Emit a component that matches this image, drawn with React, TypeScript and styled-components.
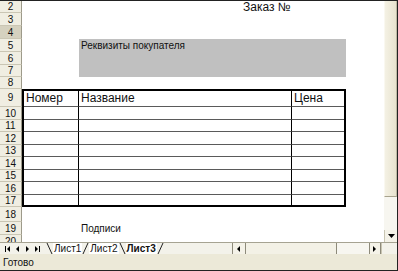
import React from "react";
import styled, { createGlobalStyle } from "styled-components";

const GlobalStyle = createGlobalStyle`
  html, body {
    margin: 0;
    padding: 0;
    background: #ffffff;
  }
  body {
    font-family: "Liberation Sans", Arial, sans-serif;
  }
`;

const Window = styled.div`
  width: 398px;
  height: 271px;
  box-sizing: border-box;
  border-top: 1px solid #222;
  border-right: 1px solid #222;
  border-bottom: 1px solid #222;
  display: flex;
  flex-direction: column;
  overflow: hidden;
  background: #fff;
`;

const SheetArea = styled.div`
  display: flex;
  height: 241px;
  overflow: hidden;
`;

const Grid = styled.div`
  flex: 1;
  display: grid;
  grid-template-columns: 22px 57px 213px 54px 1fr;
  grid-template-rows: 12px 13px 13px 13px 13px 12px 12px 18px 13px 12px 13px 12px 13px 12px 13px 12px 15px 13px 13px;
  align-content: start;
  overflow: hidden;
`;

const RowHead = styled.div<{ $active?: boolean; $row: number }>`
  grid-column: 1;
  grid-row: ${(p) => p.$row};
  box-sizing: border-box;
  border-bottom: 1px solid #cac6b4;
  border-right: 1px solid #9d9a8a;
  background: ${(p) => (p.$active ? "#d5d1bf" : "#f0eee2")};
  color: #111;
  font-size: 10px;
  display: flex;
  align-items: center;
  justify-content: center;
`;

const Title = styled.div`
  grid-column: 3 / 5;
  grid-row: 1;
  padding-left: 164px;
  font-size: 12px;
  color: #111;
  line-height: 12px;
`;

const GrayBox = styled.div`
  grid-column: 3 / 5;
  grid-row: 4 / 7;
  background: #c0c0c0;
  font-size: 10px;
  color: #111;
  padding: 1px 0 0 2px;
`;

const Table = styled.div`
  grid-column: 2 / 5;
  grid-row: 8 / 17;
  box-sizing: border-box;
  border: 2px solid #000;
  display: grid;
  grid-template-columns: 55px 213px 1fr;
  grid-template-rows: 16px 13px 12px 13px 12px 13px 12px 13px 1fr;
`;

const Cell = styled.div<{ $last?: boolean; $lastRow?: boolean }>`
  box-sizing: border-box;
  border-right: ${(p) => (p.$last ? "none" : "1px solid #000")};
  border-bottom: ${(p) => (p.$lastRow ? "none" : "1px solid #5a5a5a")};
  font-size: 12px;
  color: #111;
  padding-left: 2px;
  line-height: 15px;
  white-space: nowrap;
`;

const Note = styled.div`
  grid-column: 3;
  grid-row: 18;
  font-size: 10px;
  color: #111;
  padding-left: 2px;
  display: flex;
  align-items: center;
`;

const VScroll = styled.div`
  width: 13px;
  display: flex;
  flex-direction: column;
  background: #f7f6f0;
`;

const VThumb = styled.div`
  height: 196px;
  box-sizing: border-box;
  background: linear-gradient(to right, #f4f1e4, #e8e3cf);
  border-left: 1px solid #faf8f0;
  border-right: 1px solid #bdb8a2;
  border-bottom: 1px solid #a8a38e;
`;

const VTrack = styled.div`
  flex: 1;
`;

const ArrowButton = styled.div`
  height: 12px;
  box-sizing: border-box;
  border-left: 1px solid #c9c5b2;
  display: flex;
  align-items: center;
  justify-content: center;
  background: #f4f2e8;
`;

const TabBar = styled.div`
  height: 12px;
  display: flex;
  align-items: stretch;
  background: #f3f2ea;
  border-top: 1px solid #a6a392;
  box-sizing: border-box;
`;

const NavButtons = styled.div`
  width: 46px;
  display: flex;
  align-items: center;
  justify-content: space-around;
  padding: 0 2px;
  box-sizing: border-box;
`;

const Tabs = styled.div`
  display: flex;
  align-items: stretch;
  width: 186px;
`;

const TabLabel = styled.span<{ $active?: boolean }>`
  font-size: 10px;
  line-height: 11px;
  font-weight: ${(p) => (p.$active ? 700 : 400)};
  color: #111;
  background: #fff;
  padding: 0 1px;
`;

const HScroll = styled.div`
  flex: 1;
  display: flex;
  background: #f7f6f0;
`;

const HButton = styled.div<{ $w: number }>`
  width: ${(p) => p.$w}px;
  box-sizing: border-box;
  border-left: 1px solid #8d8a7a;
  border-right: 1px solid #8d8a7a;
  display: flex;
  align-items: center;
  justify-content: center;
  background: #f4f2e8;
`;

const HThumb = styled.div`
  width: 91px;
  box-sizing: border-box;
  background: #f3f1e6;
  border-right: 1px solid #8d8a7a;
`;

const HTrack = styled.div`
  flex: 1;
`;

const Corner = styled.div`
  width: 15px;
  background: #f3f2ea;
  border-left: 1px solid #c9c5b2;
`;

const StatusBar = styled.div`
  flex: 1;
  display: flex;
  align-items: center;
  background: #ece9d8;
  font-size: 10px;
  color: #111;
  padding-left: 3px;
`;

const Tri = ({ dir, bar }: { dir: "l" | "r" | "d"; bar?: boolean }) => {
  if (dir === "d") {
    return (
      <svg width="7" height="4" viewBox="0 0 7 4">
        <path d="M0 0h7L3.5 4z" fill="#000" />
      </svg>
    );
  }
  return (
    <svg width={bar ? 6 : 4} height="6" viewBox={bar ? "0 0 6 6" : "0 0 4 6"}>
      {dir === "l" ? (
        <>
          {bar && <rect x="0" y="0" width="1" height="6" fill="#000" />}
          <path d={bar ? "M5 0v6L2 3z" : "M3 0v6L0 3z"} fill="#000" />
        </>
      ) : (
        <>
          <path d="M0 0v6l3-3z" fill="#000" />
          {bar && <rect x="4" y="0" width="1" height="6" fill="#000" />}
        </>
      )}
    </svg>
  );
};

const Slant = ({ back }: { back?: boolean }) => (
  <svg width="7" height="11" viewBox="0 0 7 11">
    <path
      d={back ? "M1 0L6 11" : "M6 0L1 11"}
      stroke="#222"
      strokeWidth="1"
      fill="none"
    />
  </svg>
);

const rowNumbers = Array.from({ length: 19 }, (_, i) => i + 2);
const tableRows = Array.from({ length: 9 }, (_, i) => i);

export default function App() {
  return (
    <>
      <GlobalStyle />
      <Window>
        <SheetArea>
          <Grid>
            {rowNumbers.map((n, i) => (
              <RowHead key={n} $row={i + 1} $active={n === 4}>
                {n}
              </RowHead>
            ))}
            <Title>Заказ №</Title>
            <GrayBox>Реквизиты покупателя</GrayBox>
            <Table>
              {tableRows.map((r) => {
                const lastRow = r === 8;
                const labels = r === 0 ? ["Номер", "Название", "Цена"] : ["", "", ""];
                return labels.map((t, c) => (
                  <Cell key={`${r}-${c}`} $last={c === 2} $lastRow={lastRow}>
                    {t}
                  </Cell>
                ));
              })}
            </Table>
            <Note>Подписи</Note>
          </Grid>
          <VScroll>
            <VThumb />
            <VTrack />
            <ArrowButton>
              <Tri dir="d" />
            </ArrowButton>
          </VScroll>
        </SheetArea>
        <TabBar>
          <NavButtons>
            <Tri dir="l" bar />
            <Tri dir="l" />
            <Tri dir="r" />
            <Tri dir="r" bar />
          </NavButtons>
          <Tabs>
            <Slant back />
            <TabLabel>Лист1</TabLabel>
            <Slant />
            <TabLabel>Лист2</TabLabel>
            <Slant back />
            <TabLabel $active>Лист3</TabLabel>
            <Slant />
          </Tabs>
          <HScroll>
            <HButton $w={14}>
              <Tri dir="l" />
            </HButton>
            <HThumb />
            <HTrack />
            <HButton $w={12}>
              <Tri dir="r" />
            </HButton>
          </HScroll>
          <Corner />
        </TabBar>
        <StatusBar>Готово</StatusBar>
      </Window>
    </>
  );
}
